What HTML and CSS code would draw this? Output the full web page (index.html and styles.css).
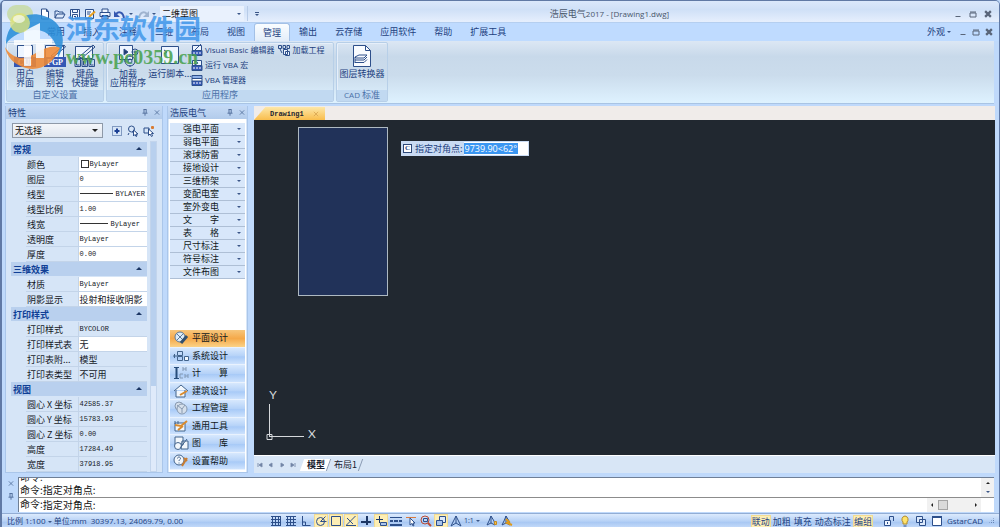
FILE: index.html
```html
<!DOCTYPE html>
<html lang="zh-CN">
<head>
<meta charset="utf-8">
<title>浩辰电气2017 - [Drawing1.dwg]</title>
<link rel="stylesheet" href="styles.css">
</head>
<body>
<svg class="defs" aria-hidden="true">
  <symbol id="pin" viewBox="0 0 6 7"><path d="M1.500 .5h3M2 .5v3.500M4.200 .5v3.500M.5 4.200h5M3 4.200v2.500"/></symbol>
  <symbol id="close" viewBox="0 0 7 7"><path d="M1 1l5 5M6 1l-5 5"/></symbol>
  <symbol id="min" viewBox="0 0 8 8"><path d="M1.500 6.500h5"/></symbol>
  <symbol id="max" viewBox="0 0 8 8"><path d="M1 2h6M1 3h6v4h-6z"/></symbol>
</svg>

<header class="titlebar">
  <div class="orb"></div>
  <nav class="quick" aria-label="快速访问">
    <button aria-label="新建"><svg viewBox="0 0 12 12"><path fill="#fff" d="M2.500 1h5l2 2.500v7.500h-7zM7.500 1v2.500h2"/></svg></button>
    <button aria-label="打开"><svg viewBox="0 0 12 12"><path d="M1 10v-7h3l1 1h4v2M1 10l2-4h8l-2 4z"/></svg></button>
    <button aria-label="保存"><svg viewBox="0 0 12 12"><path fill="#eef5ff" d="M1.500 1.500h9v9h-9z"/><path d="M3.500 1.500v3h5v-3M3.500 10.500v-4h5v4M5 8.500h2"/></svg></button>
    <button aria-label="另存为"><svg viewBox="0 0 12 12"><path fill="#eef5ff" d="M1.500 1.500h8v9h-8z"/><path d="M3 4h4M3 6h3"/><path stroke="#e8a020" stroke-width="2" d="M11 3.500l-6 5.500"/><path d="M5 9l-1 1"/></svg></button>
    <button aria-label="打印"><svg viewBox="0 0 12 12"><path fill="#eef5ff" d="M3 4.500v-3.500h6v3.500M1 4.500h10v4h-10zM3 7.500h6v3.500h-6z"/></svg></button>
    <button class="undo" aria-label="放弃"><svg viewBox="0 0 12 12"><path stroke="#3558b0" stroke-width="2" d="M2 6c3-3 7-2 8 4"/><path fill="#3558b0" stroke="none" d="M0 3v6h6z"/></svg><i class="tri"></i></button>
    <button class="redo" aria-label="重做"><svg viewBox="0 0 12 12"><path stroke="#9fb3cf" stroke-width="2" d="M10 6c-3-3-7-2-8 4"/><path fill="#9fb3cf" stroke="none" d="M12 3v6h-6z"/></svg><i class="tri"></i></button>
    <div class="pick workspace"><select aria-label="工作空间"><option>二维草图</option></select><i class="tri"></i></div>
    <button class="more" aria-label="自定义"><b></b><i class="tri"></i></button>
  </nav>
  <h1 class="title">浩辰电气<span class="lat">2017 - [Drawing1.dwg]</span></h1>
  <div class="winbtns">
    <button aria-label="最小化"><svg><use href="#min"/></svg></button>
    <button aria-label="最大化"><svg><use href="#max"/></svg></button>
    <button aria-label="关闭"><svg class="bold"><use href="#close"/></svg></button>
  </div>
</header>

<nav class="tabs" aria-label="功能区选项卡">
  <button>常用</button><button>插入</button><button>注释</button><button>三维</button><button>布局</button><button>视图</button><button class="active">管理</button><button>输出</button><button>云存储</button><button>应用软件</button><button>帮助</button><button>扩展工具</button>
  <div class="winbtns doc">
    <button class="look">外观<i class="tri"></i></button>
    <button aria-label="最小化"><svg><use href="#min"/></svg></button>
    <button aria-label="还原"><svg><use href="#max"/></svg></button>
    <button aria-label="关闭"><svg class="bold"><use href="#close"/></svg></button>
  </div>
</nav>

<section class="ribbon">
  <div class="group">
    <div class="tools custom">
      <button class="big"><svg viewBox="0 0 24 24"><path fill="#eef5ff" d="M4.500 1.500h15v15h-15z"/><path fill="#3457b5" stroke="none" d="M1 13h22v10h-22z"/><text x="12" y="21">CUI</text></svg>用户<br>界面</button>
      <button class="big"><svg viewBox="0 0 24 24"><path fill="#eef5ff" d="M2.500 1.500h18v15h-18z"/><path d="M8 12L21 1l1.500 2L10 13z"/><path fill="#3457b5" stroke="none" d="M1 13h22v10h-22z"/><text x="12" y="21">PGP</text></svg>编辑<br>别名</button>
      <button class="big"><svg viewBox="0 0 24 24"><path fill="#eef5ff" d="M2.500 2.500h17v12h-17z"/><path d="M6 13L20 1l2 2L9 14zM2 15.500h5.500v7h-5.500zM9 15.500h5.500v7H9zM16 15.500h5.500v7H16zM3.500 17v4h3M10.500 17v4h3M17.500 17v4h3"/></svg>键盘<br>快捷键</button>
    </div>
    <div class="caption">自定义设置</div>
  </div>
  <div class="group apps">
    <div class="tools">
      <button class="big wide"><svg viewBox="0 0 24 24"><path fill="#eef5ff" d="M3.500 1.500h13v14h-13z"/><path fill="#223a6b" d="M8 5v6l4-3z"/><circle cx="19" cy="8" r="3"/><circle cx="19" cy="8" r="1"/><circle cx="14" cy="17" r="5"/><circle cx="14" cy="17" r="2"/><path d="M14 11v2M14 21v2M8 17h2M18 17h2M10 13l1 1M17 20l1 1"/></svg>加载<br>应用程序</button>
      <button class="big wide"><svg viewBox="0 0 24 24"><path fill="#eef5ff" d="M3.500 2.500h17v17h-17z"/><path d="M6 6l3 2-3 2M3.500 19.500v-8"/></svg>运行脚本...</button>
      <div class="smalls">
        <button><svg viewBox="0 0 12 12"><path fill="#eef5ff" d="M1.500 1.500h9v6h-9z"/><path d="M4 6l6-6"/><path fill="#3457b5" d="M1 6.500h10v5H1z"/><path stroke="#fff" d="M2 9h2M5 9h2M8 9h2"/></svg>Visual Basic 编辑器</button>
        <button><svg viewBox="0 0 12 12"><path fill="#eef5ff" d="M1.500 1.500h9v6h-9z"/><path d="M4 2v4l3-2z"/><path fill="#3457b5" d="M1 6.500h10v5H1z"/><path stroke="#fff" d="M2 9h2M5 9h2M8 9h2"/></svg>运行 VBA 宏</button>
        <button><svg viewBox="0 0 12 12"><path fill="#8fb1e8" d="M1 1.500h10v3H1z"/><path fill="#fff" d="M1 4.500h10v3H1z"/><path fill="#3457b5" d="M1 7h10v4.500H1z"/><path stroke="#fff" d="M2 9h2M5 9h2M8 9h2"/></svg>VBA 管理器</button>
      </div>
      <div class="smalls">
        <button class="load"><svg viewBox="0 0 12 12"><path d="M.5 1.500h3v3h-3zM5 1.500h2.500v3H5zM9 1.500h2.500v3H9zM2 5l2 4"/><path fill="#eef5ff" d="M5.500 5.500h4v5h-4zM7.500 7.500h4v4h-4z"/></svg>加载工程</button>
      </div>
    </div>
    <div class="caption">应用程序</div>
  </div>
  <div class="group">
    <div class="tools">
      <button class="big cad"><svg viewBox="0 0 24 24"><path fill="#f8fbff" d="M3.500 1.500h12l5 5v16h-17z"/><path d="M15.500 1.500v5h5M17 3l3 3M5 13l4-2h8l-3 3H6zM5 16l9 0 3-3M5 18.500h9l3-3M5 13v6"/></svg>图层转换器</button>
    </div>
    <div class="caption"><span class="lat">CAD</span> 标准</div>
  </div>
</section>

<main class="work">
  <aside class="panel props">
    <h2 class="head">特性<span><svg><use href="#pin"/></svg><svg><use href="#close"/></svg></span></h2>
    <div class="picker">
      <div class="pick object"><select aria-label="选择对象"><option>无选择</option></select><i></i></div>
      <button aria-label="切换"><svg viewBox="0 0 12 12"><path stroke-dasharray="1 1" d="M1.500 1.500h9v9h-9z"/><path stroke="#1b3f94" stroke-width="2" d="M3.500 6h5M6 3.500v5"/></svg></button>
      <button aria-label="快速选择"><svg viewBox="0 0 12 12"><circle cx="4.500" cy="4" r="3"/><path d="M2 8l-1 2M5 7h4v3"/><path fill="#fff" d="M6.500 5v6l1.500-1.500 1 2 1-.5-1-2h2z"/></svg></button>
      <button aria-label="选择"><svg viewBox="0 0 12 12"><path d="M1 3h5v5H1z"/><path fill="#fff" d="M5.500 4v6.500l1.500-1.500 1.500 2.500 1-.5-1-2.500h2z"/><path stroke="#d87a30" stroke-width="2" d="M8 2.500h3M9.500 1v3"/></svg></button>
    </div>
    <div class="sheet">
      <table>
        <colgroup><col class="c1"><col class="c2"><col></colgroup>
        <tbody>
          <tr class="sec"><th colspan="3">常规<i></i></th></tr>
          <tr><td></td><th>颜色</th><td class="v m"><b class="swatch"></b>ByLayer</td></tr>
          <tr><td></td><th>图层</th><td class="v m">0</td></tr>
          <tr><td></td><th>线型</th><td class="v m"><b class="line"></b>BYLAYER</td></tr>
          <tr><td></td><th>线型比例</th><td class="v m">1.00</td></tr>
          <tr><td></td><th>线宽</th><td class="v m"><b class="line short"></b>ByLayer</td></tr>
          <tr><td></td><th>透明度</th><td class="v m">ByLayer</td></tr>
          <tr><td></td><th>厚度</th><td class="v m">0.00</td></tr>
        </tbody>
        <tbody>
          <tr class="sec"><th colspan="3">三维效果<i></i></th></tr>
          <tr><td></td><th>材质</th><td class="v m">ByLayer</td></tr>
          <tr><td></td><th>阴影显示</th><td class="v">投射和接收阴影</td></tr>
        </tbody>
        <tbody>
          <tr class="sec"><th colspan="3">打印样式<i></i></th></tr>
          <tr><td></td><th>打印样式</th><td class="m">BYCOLOR</td></tr>
          <tr><td></td><th>打印样式表</th><td class="v">无</td></tr>
          <tr><td></td><th>打印表附...</th><td>模型</td></tr>
          <tr><td></td><th>打印表类型</th><td>不可用</td></tr>
        </tbody>
        <tbody>
          <tr class="sec"><th colspan="3">视图<i></i></th></tr>
          <tr><td></td><th>圆心 X 坐标</th><td class="m">42585.37</td></tr>
          <tr><td></td><th>圆心 Y 坐标</th><td class="m">15783.93</td></tr>
          <tr><td></td><th>圆心 Z 坐标</th><td class="m">0.00</td></tr>
          <tr><td></td><th>高度</th><td class="m">17284.49</td></tr>
          <tr><td></td><th>宽度</th><td class="m">37918.95</td></tr>
        </tbody>
      </table>
      <div class="vbar"><i></i></div>
    </div>
  </aside>

  <aside class="panel elec">
    <h2 class="head">浩辰电气<span><svg><use href="#pin"/></svg><svg><use href="#close"/></svg></span></h2>
    <div class="lists">
      <div class="menu">
        <button>强电平面<i class="tri"></i></button>
        <button>弱电平面<i class="tri"></i></button>
        <button>滚球防雷<i class="tri"></i></button>
        <button>接地设计<i class="tri"></i></button>
        <button>三维桥架<i class="tri"></i></button>
        <button>变配电室<i class="tri"></i></button>
        <button>室外变电<i class="tri"></i></button>
        <button>文　　字<i class="tri"></i></button>
        <button>表　　格<i class="tri"></i></button>
        <button>尺寸标注<i class="tri"></i></button>
        <button>符号标注<i class="tri"></i></button>
        <button>文件布图<i class="tri"></i></button>
      </div>
      <div class="modes">
        <button class="on"><svg viewBox="0 0 16 16"><circle cx="7" cy="7" r="5" fill="#dcebf7" stroke="#5c7896"/><path stroke="#5c7896" d="M3.500 3.500l7 7M10.500 3.500l-7 7"/><path stroke="#31506f" stroke-width="3" d="M14 6l-6 7"/></svg>平面设计</button>
        <button><svg viewBox="0 0 16 16"><path d="M0 8h4M1.500 6v4M4.500 3.500h5v4h-5zM4.500 8.500h5v4h-5z"/><path fill="#f2f7fc" d="M11.500 8.500h4v4h-4z"/></svg>系统设计</button>
        <button><svg viewBox="0 0 16 16"><path stroke="#274c7a" stroke-width="2" d="M3.500 3v10"/><path stroke="#274c7a" d="M1 2.500h5M1 13.500h5"/><path stroke="#8299b5" d="M10 2v4M13 2v4M10 4h3M10 9h-3v4h3M12 9v4M15 9v4M12 11h3"/></svg>计　　算</button>
        <button><svg viewBox="0 0 16 16"><path fill="#f2f7fc" d="M1 8l7-6 7 6M3 7v7h9V7"/><path stroke="#d98a2c" stroke-width="2" d="M7 12l7-4"/></svg>建筑设计</button>
        <button><svg viewBox="0 0 16 16"><circle cx="6" cy="6" r="4" fill="#d5dfeb" stroke="#8799b0"/><circle cx="9" cy="9" r="5" fill="#d5dfeb" stroke="#8799b0"/><path stroke="#8799b0" d="M4 5l5 4 3-4M9 9v4"/></svg>工程管理</button>
        <button><svg viewBox="0 0 16 16"><path fill="#f2f7fc" d="M2 5h10v8H2zM2 3v3M5 3v3"/><path stroke="#d98a2c" stroke-width="2" d="M2 7l6 1 6-5M5 12l5-4"/></svg>通用工具</button>
        <button><svg viewBox="0 0 16 16"><path fill="#f2f7fc" d="M2 2h8v8H2zM9 6h6v8h-7z"/><circle cx="5" cy="11" r="3.500" fill="#f2f7fc"/><path d="M7 13l7-9"/></svg>图　　库</button>
        <button><svg viewBox="0 0 16 16"><circle cx="6" cy="7" r="5" fill="#f2f7fc"/><path d="M4.500 5.500c0-2 3-2 3 0 0 1-1.500 1-1.500 2.500M6 9.500v1"/><path stroke="#c87d32" stroke-width="2" d="M14 5l-5 8M11 5l3 3"/></svg>设置帮助</button>
      </div>
    </div>
  </aside>

  <section class="drawing">
    <div class="doctabs"><button><span>Drawing1</span><svg><use href="#close"/></svg></button></div>
    <div class="canvas">
      <div class="selection"></div>
      <label class="dyn"><b>C</b><span>指定对角点:</span><input value="9739.90&lt;62°"></label>
      <svg class="ucs" viewBox="0 0 60 60"><path d="M5.500 48V15M6 47.500h34M3 45.500h5v5H3z"/><text x="9" y="10">Y</text><text x="48" y="49">X</text></svg>
    </div>
    <div class="layouts">
      <div class="arrows"><button aria-label="第一个"><svg viewBox="0 0 6 6"><path d="M1 1v4M5 1v4L2 3z"/></svg></button><button aria-label="上一个"><svg viewBox="0 0 6 6"><path d="M4 1v4L1 3z"/></svg></button><button aria-label="下一个"><svg viewBox="0 0 6 6"><path d="M2 1v4l3-2z"/></svg></button><button aria-label="最后一个"><svg viewBox="0 0 6 6"><path d="M5 1v4M1 1v4l3-2z"/></svg></button></div>
      <button class="sheet-tab cur">模型</button><button class="sheet-tab">布局1</button>
    </div>
  </section>
</main>

<section class="command">
  <div class="grip"><svg><use href="#close"/></svg><svg><use href="#pin"/></svg></div>
  <div class="console">
    <div class="log"><div class="lines"><p>命令:</p><p>命令:指定对角点:</p></div><div class="updown"><i class="up"></i><i class="tri"></i></div></div>
    <div class="entry"><label for="cmd">命令:</label><input id="cmd" value="指定对角点:"><div class="hbar"><i class="lt"></i><b></b><i class="rt"></i></div></div>
  </div>
</section>

<footer class="status">
  <div class="coords">比例 1:100 <i class="tri"></i> 单位:mm&nbsp; 30397.13, 24069.79, 0.00</div>
  <div class="snaps">
    <button aria-label="捕捉"><svg viewBox="0 0 12 12"><path d="M1 1.500h10M1 4.500h10M1 7.500h10M1 10.500h10M2.500 1v10M5.500 1v10M8.500 1v10M10.500 1v10"/></svg></button>
    <button aria-label="栅格"><svg viewBox="0 0 12 12"><path d="M1 1.500h10M1 4.500h10M1 7.500h10M1 10.500h10M2.500 1v10M5.500 1v10M8.500 1v10"/></svg></button>
    <button aria-label="正交"><svg viewBox="0 0 12 12"><path d="M2.500 1v9.500h8M2.500 7h3v3"/></svg></button>
    <button class="lit" aria-label="极轴"><svg viewBox="0 0 12 12"><circle cx="5.500" cy="6.500" r="4"/><path d="M5.500 6.500h6M5.500 6.500l5-5"/></svg></button>
    <button class="lit" aria-label="对象捕捉"><svg viewBox="0 0 12 12"><path d="M1.500 1.500h9v9h-9z"/></svg></button>
    <button class="lit" aria-label="对象追踪"><svg viewBox="0 0 12 12"><path d="M1 10.500h10M1.500 10l9-9M2 3l6 6"/></svg></button>
    <button aria-label="动态UCS"><svg viewBox="0 0 12 12"><path stroke="#1c3765" stroke-width="2" d="M7 1v9M1 7h10"/></svg></button>
    <button class="lit" aria-label="动态输入"><svg viewBox="0 0 12 12"><path stroke="#1c3765" d="M4.500 1v7M1 4.500h7"/><path fill="#a9c4ea" d="M5.500 7.500h6v3h-6z"/></svg></button>
    <button aria-label="线宽"><svg viewBox="0 0 12 12"><path d="M0 2.500h12"/><path stroke-width="2" d="M0 6h3M4 6h4M9 6h3M0 10h12"/></svg></button>
    <button aria-label="循环选择"><svg viewBox="0 0 12 12"><path stroke="#d87a40" d="M1 2.500h10"/><path fill="#fff" d="M5 3v7l2-1.500 1 2.500 1-.5-1-2.500h2z"/></svg></button>
    <button aria-label="查看"><svg viewBox="0 0 12 12"><circle cx="5" cy="5" r="4" stroke="#bb4b34"/><path d="M3.500 3.500h4v3h-4z"/><path stroke="#bb4b34" stroke-width="2" d="M8 8l3 3"/></svg></button>
    <button class="lit" aria-label="快捷特性"><svg viewBox="0 0 12 12"><path fill="#dce9fa" d="M4.500 1.500h6v6h-6z"/><path fill="#a9c4ea" d="M1.500 5.500h6v5h-6z"/></svg></button>
    <button class="scale"><svg viewBox="0 0 12 12"><path d="M6 1v7M6 1L3 7l-2 4 5-3 5 3-2-4z"/></svg>1:1<i class="tri"></i></button>
    <button aria-label="注释可见性"><svg viewBox="0 0 12 12"><path d="M5 1v7M5 1L3 6l-2 4 4-2 4 2-1-4z"/><path fill="#f4c04a" stroke="#c48a20" d="M8.500 6.500h2v3h-2z"/></svg></button>
    <button aria-label="自动缩放"><svg viewBox="0 0 12 12"><path d="M5 1v7M5 1L3 6l-2 4 4-2 4 2-1-4z"/><path stroke="#e09a18" stroke-width="2" d="M5 4l3 3-2 1 5 2"/></svg></button>
  </div>
  <div class="toggles"><button class="lit">联动</button><button>加粗</button><button>填充</button><button>动态标注</button><button class="lit">编组</button></div>
  <div class="tray">
    <button aria-label="锁定"><svg viewBox="0 0 12 12"><path fill="#eef5ff" d="M1.500 5.500h6v5h-6z"/><path d="M6.500 5V1.500h4V6M4.500 7v2"/></svg></button>
    <button aria-label="提示"><svg viewBox="0 0 12 12"><path fill="#ffe36b" stroke="#b08b2a" d="M6 1a3.500 3.500 0 0 1 2 6v2H4V7a3.500 3.500 0 0 1 2-6z"/><path d="M4.500 11h3"/></svg></button>
    <button aria-label="窗口"><svg viewBox="0 0 12 12"><path fill="#dce9fa" d="M1.500 1.500h6v6h-6zM4.500 4.500h6v6h-6z"/></svg></button>
    <button aria-label="全屏"><svg viewBox="0 0 12 12"><path fill="#fff" d="M1.500 1.500h9v9h-9z"/><path stroke-width="2" d="M1 2h10"/></svg></button>
    <span>GstarCAD</span><b class="resize"></b>
  </div>
</footer>

<div class="mark">
  <svg viewBox="0 0 62 60"><path fill="#2c8fd9" d="M2 33C2 12 22-2 40 5 58 10 64 28 54 47 54 30 44 18 30 19 18 20 8 24 2 33z"/><path fill="#f08a35" d="M1 36C8 48 20 50 32 42c10-6 18-8 24-5C50 52 36 61 22 57 10 54 3 46 1 36z"/><path fill="#fff" fill-opacity=".9" d="M10 29h10v-9l16-8v16h12v5h-8v14h-8V33h-5v22h-7V34H10z"/><circle cx="16" cy="12" r="10" fill="#e2e36a" fill-opacity=".8"/><ellipse cx="15" cy="8" rx="6" ry="4" fill="#fff" fill-opacity=".7"/></svg>
  <div><p class="name">河东软件园</p><p class="site">www.pc0359.cn</p></div>
</div>
</body>
</html>
```
FILE: styles.css
```css
* { box-sizing: border-box; margin: 0; padding: 0; }
body {
  display: flex;
  flex-direction: column;
  min-height: 100vh;
  overflow: hidden;
  background: #bfd9fb;
  border: 1px solid #6079a5;
  border-width: 1px 1px 1px 2px;
  border-radius: 5px 5px 0 0;
  color: #1d4180;
  font: 9px/12px "Noto Sans CJK SC", sans-serif;
}
button, select, input { font: inherit; color: inherit; background: none; border: 0; }
h1, h2, i { font-weight: normal; font-style: normal; }
svg { fill: none; stroke: #2d4f8a; flex: none; }
.defs { position: absolute; width: 0; height: 0; }
.lat { font-family: "Open Sans", sans-serif; font-size: 8px; }
.tri { display: inline-block; border: 2px solid transparent; border-top-color: #3b5687; border-bottom: 0; }
.up { border: 2px solid transparent; border-bottom-color: #222; border-top: 0; }

.titlebar {
  display: flex;
  align-items: center;
  height: 22px;
  padding-top: 4px;
  background: linear-gradient(#dbe8fb, #cfe0f7 40%, #e6effd);
  border-bottom: 1px solid #b5cff0;
}
.orb { width: 26px; height: 18px; margin-left: 5px; border-radius: 9px; background: #c9dcb0; }
.quick { display: flex; align-items: center; padding-left: 6px; gap: 3px; }
.quick button { display: flex; align-items: center; }
.quick svg { width: 12px; height: 12px; }
.quick .undo, .quick .redo { gap: 3px; width: 20px; }
.pick { display: flex; align-items: center; }
.pick select { appearance: none; flex: 1; min-width: 0; }
.workspace { width: 84px; height: 15px; padding: 0 3px 0 2px; color: #111; background: #e9f1fd; }
.quick .more { flex-direction: column; justify-content: center; gap: 1px; width: 18px; height: 15px; border-left: 1px solid #b8cce8; }
.more b { width: 4px; height: 1px; background: #3b5687; }
.title { flex: 1; text-align: center; font-size: 9px; color: #49566b; }
.winbtns { display: flex; align-items: center; gap: 7px; padding-right: 7px; }
.winbtns svg { display: block; width: 8px; height: 8px; stroke: #596579; }
.winbtns .bold { stroke-width: 2; }

.tabs { display: flex; align-items: stretch; height: 18px; padding-left: 36px; background: #bfdbff; }
.tabs > button { padding: 0 9px; }
.tabs .active { background: linear-gradient(#fafdff, #e3edf9); border: 1px solid #a3c0e6; border-bottom: 0; border-radius: 3px 3px 0 0; padding: 0 8px; }
.doc { margin-left: auto; gap: 5px; padding-right: 6px; }
.look { display: flex; align-items: center; gap: 2px; margin-right: 3px; }

.ribbon {
  display: flex;
  gap: 2px;
  height: 63px;
  margin: 0 5px 2px 3px;
  padding: 1px 1px 1px;
  background: linear-gradient(#dce7f4, #c8d9ea 25%, #cbdcec 55%, #def2ff);
  border-bottom: 1px solid #a9c4e4;
}
.group { display: flex; flex-direction: column; border: 1px solid #b7cfe8; border-radius: 2px; box-shadow: inset 1px 1px #e6effa; }
.tools { display: flex; flex: 1; align-items: flex-start; padding-top: 1px; }
.custom { padding: 1px 3px 0; }
.caption { height: 11px; line-height: 10px; text-align: center; color: #4a70a8; background: #c1d9f1; }
.big { display: flex; flex-direction: column; align-items: center; width: 30px; line-height: 9px; white-space: nowrap; }
.big svg { width: 24px; height: 24px; margin-bottom: 1px; }
.big text { fill: #fff; stroke: none; font: bold 8px "Liberation Serif", serif; text-anchor: middle; }
.wide { width: 42px; }
.cad { width: 50px; }
.apps { width: 228px; }
.smalls { display: flex; flex-direction: column; gap: 3px; font: 8px/12px "Open Sans", "Noto Sans CJK SC", sans-serif; }
.smalls button { display: flex; align-items: center; gap: 2px; white-space: nowrap; }
.smalls svg { width: 12px; height: 12px; }
.smalls .load { margin-left: 4px; }

.work { display: flex; flex: 1; min-height: 0; padding: 0 4px 0 3px; }
.panel { display: flex; flex-direction: column; background: #d6e5f7; border: 1px solid #aac6ea; border-top: 0; }
.head { display: flex; justify-content: space-between; align-items: center; height: 13px; padding: 0 2px; font-size: 9px; background: linear-gradient(#c5daf5, #b2cbeb); }
.head span { display: flex; gap: 6px; }
.head svg { width: 6px; height: 7px; stroke: #55719e; }
.props { width: 158px; margin-right: 4px; }
.picker { display: flex; align-items: center; gap: 4px; padding: 4px 6px 3px; }
.object { width: 91px; height: 15px; margin-right: 4px; padding: 0 4px 0 2px; color: #111; background: linear-gradient(#f4f6fa, #e0e6ef); border: 1px solid #8e99a8; }
.object i { border: 3px solid transparent; border-top-color: #222; border-bottom: 0; }
.picker button, .picker svg { display: block; width: 12px; height: 12px; }
.sheet { display: flex; gap: 3px; padding: 0 5px; }
table { width: 136px; border-collapse: collapse; table-layout: fixed; color: #15191f; }
.c1 { width: 15px; }
.c2 { width: 52px; }
td, th { height: 15px; line-height: 13px; border: 1px solid #c3d4e9; border-width: 0 0 1px 1px; white-space: nowrap; overflow: hidden; padding: 0 1px; text-align: left; font-weight: normal; }
tr td:first-child { border: 0; }
tr:not(.sec) th { border-left: 0; padding: 0 0 0 1px; }
.sec th { background: #b9d0ee; color: #0f3f96; font-weight: bold; border: solid #d6e5f7; border-width: 1px 0; padding-left: 2px; }
.sec i { float: right; margin: 4px 4px 0; border: 3px solid transparent; border-bottom-color: #1b3563; border-top: 0; }
.v { background: #fff; }
.m { font: 7px/13px "Liberation Mono", monospace; }
.swatch { display: inline-block; width: 8px; height: 8px; margin: 0 1px; border: 1px solid #333; vertical-align: middle; }
.line { display: inline-block; width: 33px; height: 1px; margin: 0 3px 0 0; background: #333; vertical-align: middle; }
.line.short { width: 28px; }
.vbar { width: 7px; background: #dfeafa; border: 1px solid #c3d5ec; }
.vbar i { display: block; height: 244px; background: #b8d0ee; }

.elec { width: 81px; margin-right: 6px; }
.lists { display: flex; flex-direction: column; flex: 1; justify-content: space-between; padding: 4px 1px 2px; margin: 0 1px; background: #fff; }
.menu, .modes { display: flex; flex-direction: column; }
.menu button { display: flex; align-items: center; justify-content: space-between; height: 13px; padding: 0 4px 0 13px; color: #101820; background: #d8e7fa; border-bottom: 1px solid #aebfd5; }
.modes { height: 140px; }
.modes button { display: flex; flex: 1; align-items: center; gap: 3px; padding-left: 3px; color: #101820; background: linear-gradient(#d7e8fd, #b5d2f8 50%, #a8caf7 55%, #cde2fd); border-bottom: 1px solid #e9f2fe; }
.modes .on { background: linear-gradient(#f7c67c, #f5a94a 50%, #fbd286); }
.modes svg { width: 16px; height: 16px; stroke: #43648c; }

.drawing { display: flex; flex-direction: column; flex: 1; min-width: 0; }
.doctabs { height: 14px; padding-top: 1px; background: #f0ecea; }
.doctabs button { display: flex; align-items: center; justify-content: space-between; width: 71px; height: 13px; padding: 0 6px 0 16px; font: bold 7px/12px "Liberation Mono", monospace; color: #1d2430; background: linear-gradient(#fde7a8, #f9bd4c); clip-path: polygon(16% 0, 100% 0, 100% 100%, 0 100%); }
.doctabs svg { width: 6px; height: 6px; stroke: #d9a652; }
.canvas { position: relative; flex: 1; background: #212830; overflow: hidden; }
.selection { position: absolute; left: 44px; top: 7px; width: 90px; height: 169px; background: #213259; border: 1px solid #aeb9c2; }
.dyn { position: absolute; left: 147px; top: 21px; display: flex; align-items: center; height: 15px; padding: 0 1px; background: #c9dbf3; }
.dyn b { width: 9px; height: 9px; margin: 0 3px 0 1px; border: 1px solid #2d4878; font: bold 7px/7px "Liberation Serif", serif; text-align: center; background: #fff; }
.dyn input { width: 64px; height: 13px; margin-left: 1px; padding-left: 1px; color: #fff; font: 9px/13px "Open Sans", sans-serif; background: linear-gradient(#3a96f2, #3a96f2) 0 1px / 54px 11px no-repeat, #fff; }
.ucs { position: absolute; left: 10px; bottom: 6px; width: 60px; height: 60px; stroke: #d5d8db; overflow: visible; }
.ucs text { fill: #d5d8db; stroke: none; font: 12px Lato, sans-serif; text-anchor: middle; }
.layouts { display: flex; align-items: center; height: 18px; background: #d8e6f6; border-top: 1px solid #fff; }
.arrows { display: flex; gap: 5px; width: 48px; padding-left: 3px; }
.arrows svg { display: block; width: 6px; height: 6px; stroke: #8294b2; fill: #62769a; }
.sheet-tab { position: relative; z-index: 0; padding: 0 4px 0 5px; color: #17202e; }
.sheet-tab::before { content: ""; position: absolute; z-index: -1; inset: 0; border-right: 1px solid #8a9bb3; transform: skewX(-20deg); }
.cur { font-weight: bold; }
.cur::before { background: #fff; }

.command { display: flex; padding: 4px 5px 1px 4px; }
.grip { display: flex; flex-direction: column; gap: 6px; width: 12px; padding: 3px 2px; }
.grip svg { width: 6px; height: 7px; stroke: #55719e; }
.console { flex: 1; background: #fff; border: 1px solid #6f7f96; border-width: 1px 0 0 1px; color: #111; font-size: 10px; }
.log { display: flex; justify-content: space-between; height: 20px; border-bottom: 1px solid #8c8c8c; }
.lines { display: flex; flex-direction: column; justify-content: flex-end; height: 18px; overflow: hidden; padding-left: 1px; }
.lines p { line-height: 13px; }
.updown { display: flex; flex-direction: column; justify-content: space-around; align-items: center; width: 13px; background: #f1f1f1; }
.entry { display: flex; align-items: stretch; height: 14px; padding-left: 1px; }
.entry input { flex: 1; min-width: 0; }
.hbar { display: flex; align-items: center; justify-content: space-between; width: 54px; margin-right: 13px; padding: 0 4px; background: #f1f1f1; }
.hbar b { width: 10px; height: 10px; margin-right: 22px; background: #dadada; border: 1px solid #a5a5a5; }
.lt, .rt { border: 2px solid transparent; border-right-color: #222; border-left: 0; }
.rt { border: 2px solid transparent; border-left-color: #222; border-right: 0; }

.status { display: flex; align-items: center; height: 15px; padding: 0 5px; background: linear-gradient(#dceafd, #b7d2f6 50%, #a9c8f3 60%, #c6dcfa); border-top: 1px solid #92add4; font: 8px/12px "Open Sans", "Noto Sans CJK SC", sans-serif; white-space: nowrap; }
.coords { width: 263px; font-size: 8px; }
.coords .tri { vertical-align: middle; }
.snaps { display: flex; gap: 3px; }
.status svg { display: block; width: 12px; height: 12px; }
.lit { background: #fdeeb4; outline: 1px solid #f2dc92; }
.scale { display: flex; align-items: center; gap: 2px; font-size: 7px; margin-right: 3px; }
.toggles { display: flex; gap: 3px; margin-left: auto; margin-right: 11px; font: 9px/11px "Noto Sans CJK SC", sans-serif; }
.tray { display: flex; align-items: center; gap: 4px; }
.resize { width: 6px; height: 6px; margin-left: 1px; background: conic-gradient(#6784b2 25%, transparent 0) 0 0 / 2px 2px; clip-path: polygon(100% 0, 100% 100%, 0 100%); }

.mark { position: absolute; left: 4px; top: 11px; display: flex; pointer-events: none; opacity: .88; }
.mark svg { width: 62px; height: 60px; stroke: none; }
.name { color: #4599ea; font: bold 27px/34px "Noto Sans CJK SC", sans-serif; }
.site { color: #4ba352; font: bold 20px/24px "Liberation Serif", serif; }
```
